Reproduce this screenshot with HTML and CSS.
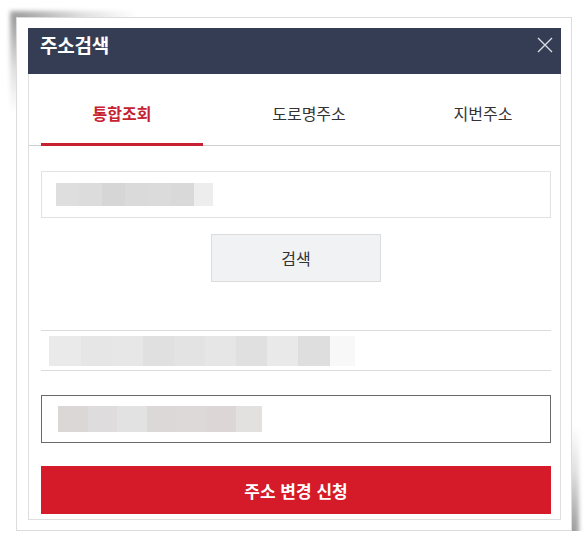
FILE: index.html
```html
<!DOCTYPE html>
<html lang="ko">
<head>
<meta charset="utf-8">
<title>주소검색</title>
<link rel="stylesheet" href="styles.css">
</head>
<body>
<div class="page">
  <div class="card">
    <div class="dialog">
      <div class="header">
        <h1 class="title">주소검색</h1>
        <button class="close" type="button" aria-label="닫기">
          <svg width="16" height="16" viewBox="0 0 16 16"><path d="M1 1 L15 15 M15 1 L1 15" stroke="#d9dce2" stroke-width="1.4" fill="none"/></svg>
        </button>
      </div>
      <div class="tabs-wrap">
        <div class="tabs">
          <div class="tab tab-1 active">통합조회</div>
          <div class="tab tab-2">도로명주소</div>
          <div class="tab tab-3">지번주소</div>
        </div>
      </div>
      <div class="body">
        <div class="field field-light">
          <span class="mosaic mosaic-a"><i></i><i></i><i></i><i></i><i></i><i></i><i></i></span>
        </div>
        <button class="search" type="button">검색</button>
        <div class="result">
          <span class="mosaic mosaic-b"><i></i><i></i><i></i><i></i><i></i><i></i><i></i><i></i><i></i><i></i></span>
        </div>
        <div class="field field-dark">
          <span class="mosaic mosaic-c"><i></i><i></i><i></i><i></i><i></i><i></i><i></i></span>
        </div>
        <button class="submit" type="button">주소 변경 신청</button>
      </div>
    </div>
  </div>
</div>
</body>
</html>
```

FILE: styles.css
```css
* { box-sizing: border-box; }
html, body { margin: 0; padding: 0; background: #ffffff; }
body { font-family: "Noto Sans CJK KR", "Noto Sans", sans-serif; color: #333; }

.page { padding: 17px 0 0 16px; position: relative; z-index: 0; }

.card {
  position: relative;
  width: 556px;
  height: 514px;
  background: #fff;
  border: 1px solid #dcdcdc;
  padding: 10px 10px 0 11px;
}
.card::before,
.card::after {
  content: "";
  position: absolute;
  z-index: -1;
  filter: blur(2px);
}
.card::before {
  left: -7px; top: -7px;
  width: 130px; height: 110px;
  background: radial-gradient(ellipse 120px 95px at 7px 7px, rgba(0,0,0,0.38), rgba(0,0,0,0.12) 55%, rgba(0,0,0,0) 100%);
}
.card::after {
  right: -8px; bottom: -8px;
  width: 175px; height: 120px;
  background: radial-gradient(ellipse 165px 105px at calc(100% - 8px) calc(100% - 8px), rgba(0,0,0,0.38), rgba(0,0,0,0.12) 55%, rgba(0,0,0,0) 100%);
}

.dialog {
  width: 533px;
  height: 492px;
  border: 1px solid #dedede;
  border-top: none;
  display: flex;
  flex-direction: column;
}

.header {
  height: 46px;
  background: #343d53;
  display: flex;
  justify-content: space-between;
  align-items: flex-start;
  padding: 3px 8px 0 12px;
  margin: 0 -1px;
}
.title {
  margin: 0;
  font-size: 19px;
  line-height: 28px;
  font-weight: 700;
  color: #fff;
  letter-spacing: -0.2px;
}
.close {
  border: 0;
  background: none;
  padding: 0;
  margin-top: 6px;
  width: 16px; height: 16px;
  display: block;
}
.close svg { display: block; }

.tabs-wrap {
  border-bottom: 1px solid #cfcfcf;
  padding: 0 9px 0 12px;
}
.tabs {
  display: flex;
  height: 71px;
}
.tab {
  padding-top: 29px;
  height: 72px;
  line-height: 20px;
  font-size: 16px;
  text-align: center;
  color: #333;
  border-bottom: 3px solid transparent;
}
.tab-1 { width: 162px; }
.tab-2 { width: 212px; }
.tab-3 { width: 136px; }
.tab.active {
  color: #c62231;
  font-weight: 700;
  border-bottom-color: #c62231;
}

.body {
  padding: 25px 9px 0 12px;
  display: flex;
  flex-direction: column;
}

.field {
  height: 47px;
  background: #fff;
  display: flex;
  align-items: center;
}
.field-light { border: 1px solid #e2e2e2; padding-left: 14px; }
.field-dark { border: 1px solid #6a6a6a; padding-left: 16px; height: 48px; margin-top: 24px; }

.mosaic { display: flex; }
.mosaic i { display: block; }

.mosaic-a i { width: 23px; height: 23px; }
.mosaic-a i:nth-child(1) { background: #dedede; }
.mosaic-a i:nth-child(2) { background: #dcdcdc; }
.mosaic-a i:nth-child(3) { background: #d6d6d6; }
.mosaic-a i:nth-child(4) { background: #dadada; }
.mosaic-a i:nth-child(5) { background: #dbdbdb; }
.mosaic-a i:nth-child(6) { background: #d9d9d9; }
.mosaic-a i:nth-child(7) { background: #ededed; width: 19px; }

.search {
  align-self: center;
  margin-top: 16px;
  width: 170px;
  height: 48px;
  border: 1px solid #dcdcdc;
  background: #f1f2f4;
  font-family: inherit;
  font-size: 16px;
  color: #333;
  padding: 0;
}

.result {
  margin-top: 48px;
  height: 41px;
  border-top: 1px solid #dcdcdc;
  border-bottom: 1px solid #dcdcdc;
  padding-left: 8px;
  display: flex;
  align-items: center;
}
.mosaic-b i { width: 31px; height: 30px; }
.mosaic-b i:nth-child(1) { background: #eaeaea; width: 32px; }
.mosaic-b i:nth-child(2) { background: #e6e6e6; }
.mosaic-b i:nth-child(3) { background: #e7e7e7; }
.mosaic-b i:nth-child(4) { background: #e0e0e0; }
.mosaic-b i:nth-child(5) { background: #e3e3e3; }
.mosaic-b i:nth-child(6) { background: #e6e6e6; }
.mosaic-b i:nth-child(7) { background: #e0e0e0; }
.mosaic-b i:nth-child(8) { background: #e9e9e9; }
.mosaic-b i:nth-child(9) { background: #dedede; width: 32px; }
.mosaic-b i:nth-child(10) { background: #f8f8f8; width: 25px; }

.mosaic-c i { width: 30px; height: 26px; }
.mosaic-c i:nth-child(1) { background: #dcd7d7; }
.mosaic-c i:nth-child(2) { background: #dedcdc; width: 29px; }
.mosaic-c i:nth-child(3) { background: #e2e2e2; }
.mosaic-c i:nth-child(4) { background: #ddd8d8; }
.mosaic-c i:nth-child(5) { background: #ddd9d9; width: 29px; }
.mosaic-c i:nth-child(6) { background: #dcd6d6; }
.mosaic-c i:nth-child(7) { background: #e2e1e0; width: 26px; }

.submit {
  margin-top: 23px;
  height: 48px;
  border: 0;
  background: #d51a29;
  color: #fff;
  font-family: inherit;
  font-size: 17px;
  font-weight: 700;
  padding: 0;
}
```
